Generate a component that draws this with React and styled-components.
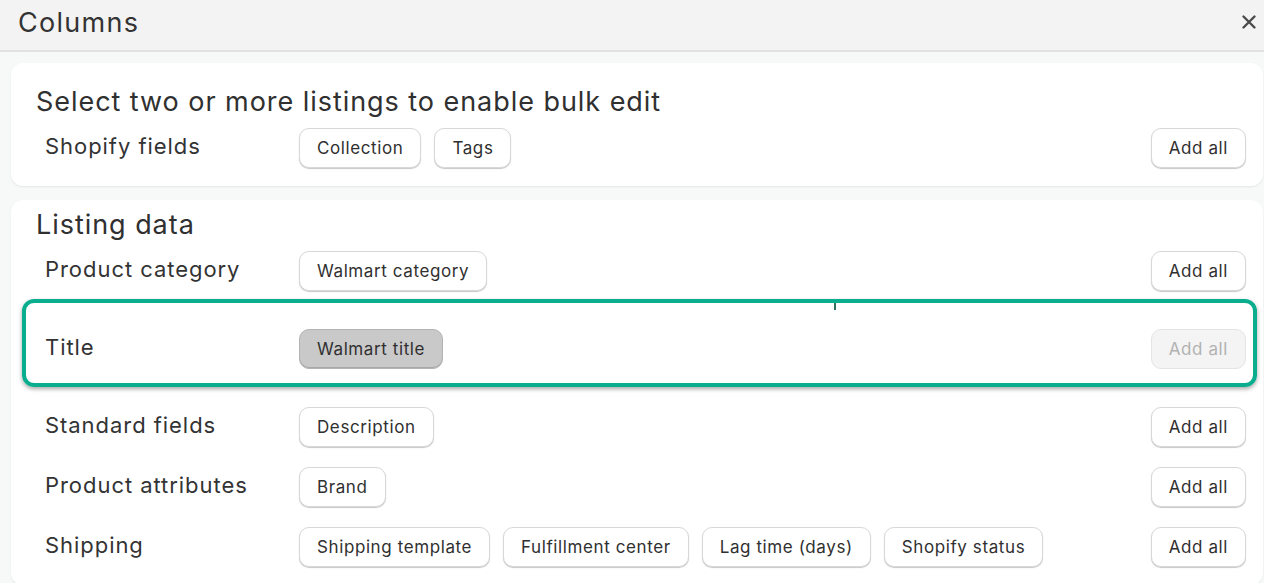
import styled, { createGlobalStyle } from 'styled-components';

const GlobalStyle = createGlobalStyle`
  html, body {
    margin: 0;
    padding: 0;
    background: #f7f8f8;
    font-family: Inter, "Noto Sans", sans-serif;
    color: #303030;
    overflow: hidden;
  }
`;

const sections = [
  {
    heading: 'Select two or more listings to enable bulk edit',
    top: 22,
    rows: [{ label: 'Shopify fields', chips: ['Collection', 'Tags'] }],
  },
  {
    heading: 'Listing data',
    top: 8,
    rows: [
      { label: 'Product category', chips: ['Walmart category'] },
      { label: 'Title', chips: ['Walmart title'], highlight: true },
      { label: 'Standard fields', chips: ['Description'] },
      { label: 'Product attributes', chips: ['Brand'] },
      { label: 'Shipping', chips: ['Shipping template', 'Fulfillment center', 'Lag time (days)', 'Shopify status'] },
    ],
  },
];

const App = () => {
  return (
    <Modal>
      <GlobalStyle />
      <Header>
        <HeaderTitle>Columns</HeaderTitle>
        <CloseButton aria-label="Close">
          <svg width="16" height="16" viewBox="0 0 16 16">
            <path d="M2.5 2.5 L13.5 13.5 M13.5 2.5 L2.5 13.5" stroke="#4a4a4a" strokeWidth="2.4" strokeLinecap="round" />
          </svg>
        </CloseButton>
      </Header>
      <Body>
        {sections.map((section) => (
          <Card key={section.heading} $top={section.top}>
            <CardHeading>{section.heading}</CardHeading>
            <Rows>
              {section.rows.map((row) => (
                <Row key={row.label} $highlight={row.highlight}>
                  <RowLabel>{row.label}</RowLabel>
                  <Chips>
                    {row.chips.map((chip) => (
                      <Chip key={chip} $selected={row.highlight}>{chip}</Chip>
                    ))}
                  </Chips>
                  <AddAll disabled={row.highlight}>Add all</AddAll>
                </Row>
              ))}
            </Rows>
          </Card>
        ))}
      </Body>
    </Modal>
  );
};

const Modal = styled.div`
  height: 583px;
  display: flex;
  flex-direction: column;
  overflow: hidden;
`;

const Header = styled.header`
  height: 52px;
  flex-shrink: 0;
  display: flex;
  align-items: center;
  justify-content: space-between;
  padding: 0 5px 6px 18px;
  box-sizing: border-box;
  background: #f3f3f3;
  border-bottom: 2px solid #e2e2e2;
`;

const HeaderTitle = styled.h1`
  margin: 0;
  font-size: 27px;
  letter-spacing: 1.3px;
  font-weight: 400;
  color: #333;
`;

const CloseButton = styled.button`
  border: none;
  background: none;
  padding: 2px;
  display: flex;
  cursor: pointer;
`;

const Body = styled.div`
  flex: 1;
  padding: 11px 1px 0 11px;
  display: flex;
  flex-direction: column;
  gap: 14px;
`;

const Card = styled.section`
  background: #fff;
  border-radius: 12px;
  box-shadow: 0 1px 2px rgba(0, 0, 0, 0.08);
  padding: ${(p) => p.$top}px 17px 18px 25px;
  flex-shrink: 0;
`;

const CardHeading = styled.h2`
  margin: 0;
  font-size: 27px;
  line-height: 34px;
  letter-spacing: 0.95px;
  font-weight: 400;
  color: #303030;
`;

const Rows = styled.div`
  display: flex;
  flex-direction: column;
  margin-top: 9px;
`;

const Row = styled.div`
  position: relative;
  display: flex;
  align-items: center;
  margin-top: 20px;
  padding-left: 9px;
  &:first-child {
    margin-top: 0;
  }
  ${(p) =>
    p.$highlight &&
    `
    margin-top: 8px;
    margin-left: -14px;
    margin-right: -11px;
    padding: 26px 7px 14px 19px;
    border: 4px solid #0aae8e;
    border-radius: 12px;
    box-shadow: 0 2px 4px rgba(0, 0, 0, 0.35);
    &::after {
      content: '';
      position: absolute;
      top: 0;
      left: 808px;
      width: 2px;
      height: 7px;
      background: #2f6f60;
    }
  `}
`;

const RowLabel = styled.div`
  width: 254px;
  flex-shrink: 0;
  font-size: 22px;
  letter-spacing: 0.95px;
  color: #333;
  margin-top: -4px;
`;

const Chips = styled.div`
  flex: 1;
  display: flex;
  gap: 13px;
`;

const Chip = styled.button`
  height: 40px;
  padding: 0 17px;
  border-radius: 10px;
  font-family: inherit;
  font-size: 17px;
  letter-spacing: 0.6px;
  color: #303030;
  background: ${(p) => (p.$selected ? '#c9c9c9' : '#fff')};
  border: 1px solid ${(p) => (p.$selected ? '#b3b3b3' : '#d8d8d8')};
  box-shadow: ${(p) => (p.$selected ? 'inset 0 -1px 0 #a8a8a8' : '0 1px 1px rgba(0, 0, 0, 0.22)')};
  cursor: pointer;
`;

const AddAll = styled.button`
  height: 40px;
  padding: 0 17px;
  border-radius: 10px;
  font-family: inherit;
  font-size: 17px;
  letter-spacing: 0.6px;
  color: #303030;
  background: #fff;
  border: 1px solid #d8d8d8;
  box-shadow: 0 1px 1px rgba(0, 0, 0, 0.22);
  cursor: pointer;
  &:disabled {
    color: #b2b2b2;
    background: #f4f4f4;
    border-color: #e4e4e4;
    box-shadow: none;
    cursor: default;
  }
`;

export default App;
